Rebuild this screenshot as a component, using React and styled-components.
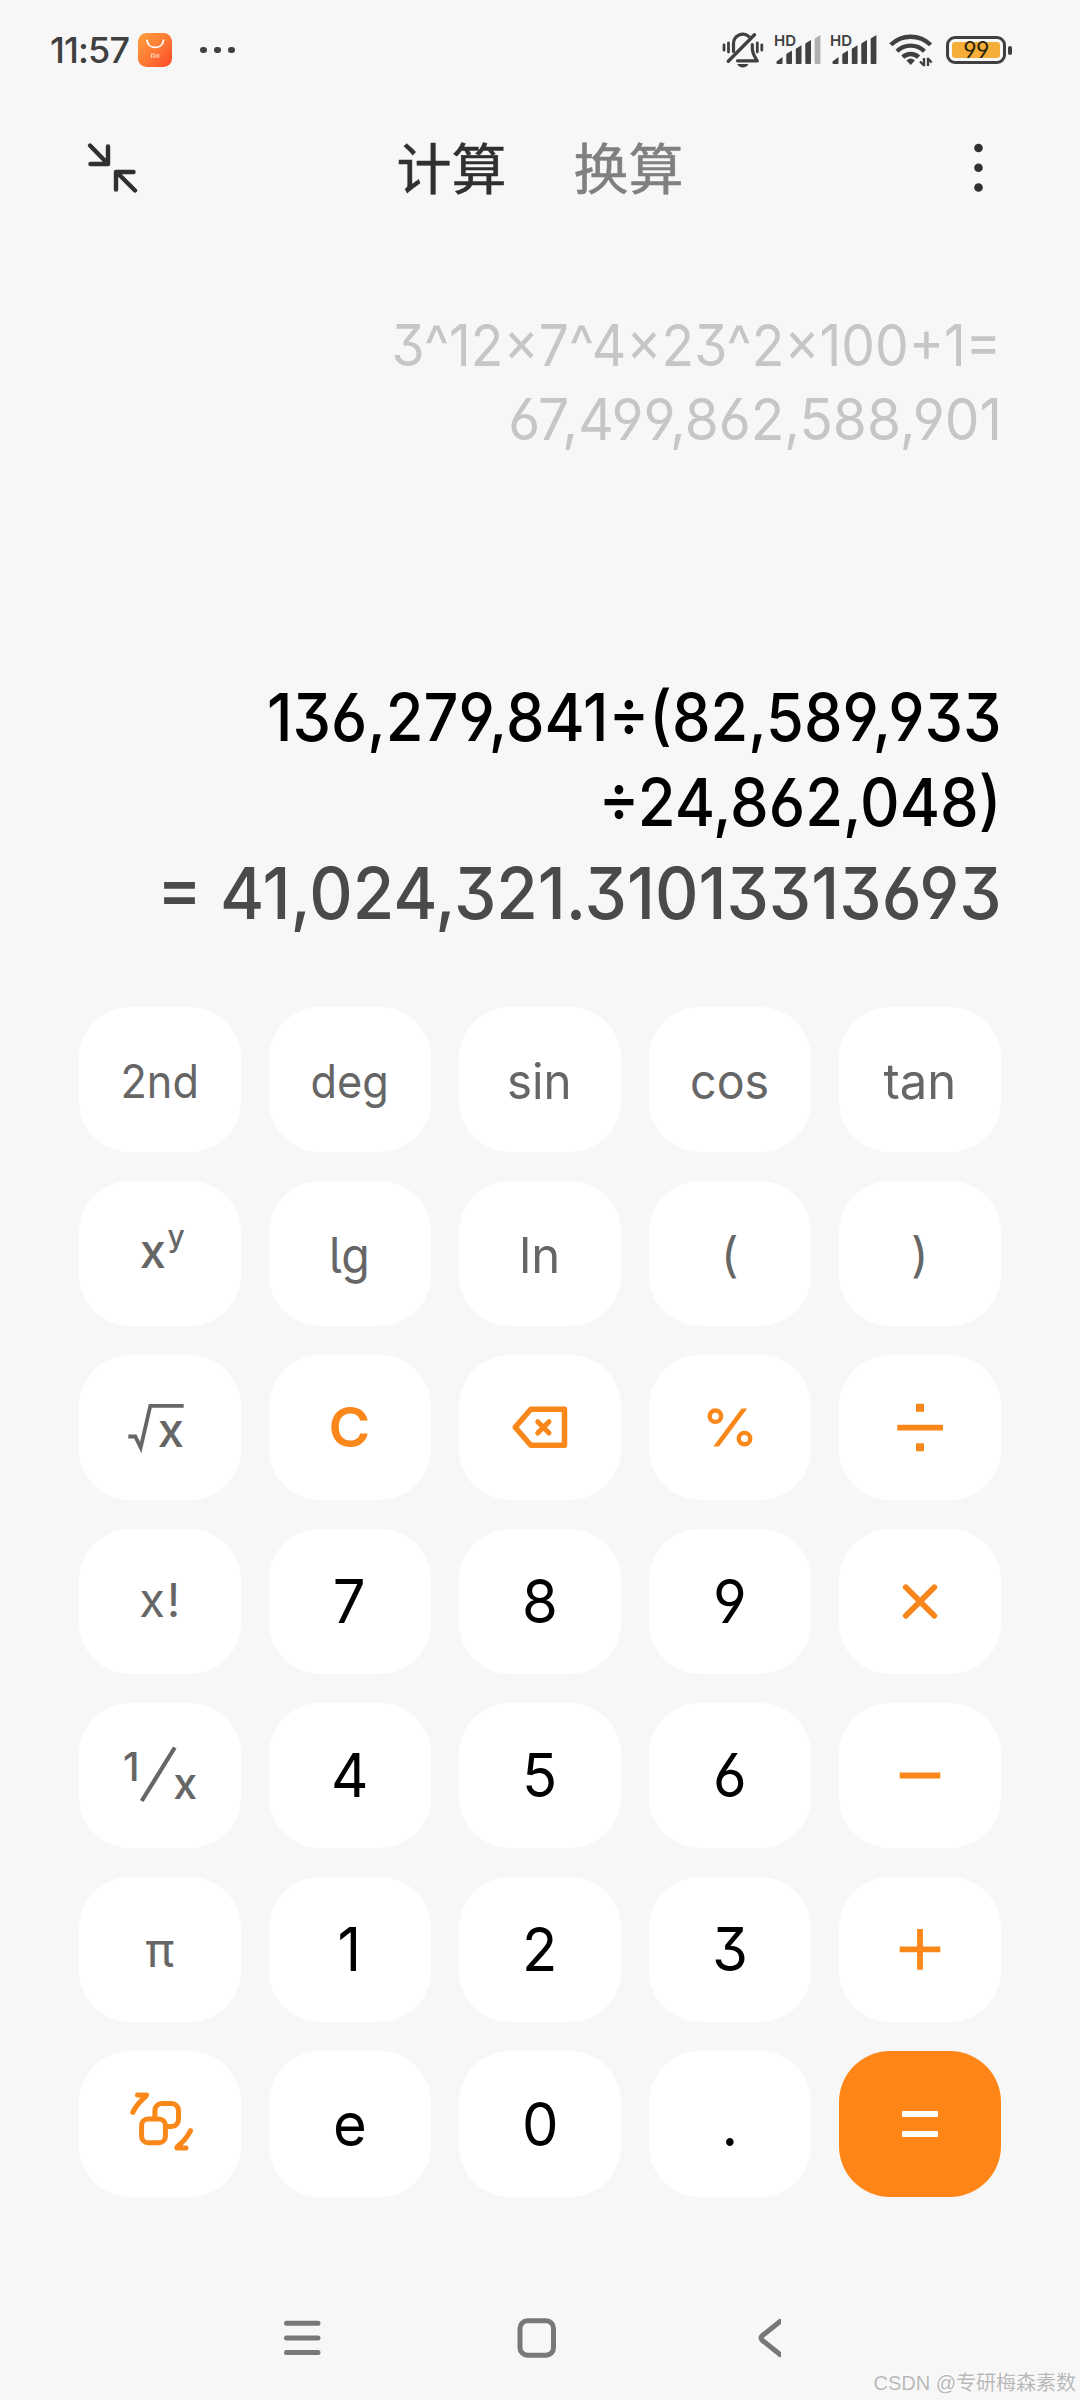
import styled, { createGlobalStyle } from 'styled-components';

const palette = {
  bg: '#f7f7f7',
  key: '#ffffff',
  ink: '#000000',
  title: '#303030',
  status: '#404040',
  muted: '#808080',
  func: '#666666',
  result: '#4a4a4a',
  history: '#c6c6c6',
  orange: '#fa8719',
  equals: '#ff8616',
};

const GlobalStyle = createGlobalStyle`
  body {
    margin: 0;
    background: ${palette.bg};
    font-family: Inter, 'Noto Sans CJK SC', sans-serif;
    font-feature-settings: 'cv03', 'cv04', 'cv09';
  }
`;

const Screen = styled.div`
  position: relative;
  display: flex;
  flex-direction: column;
  width: 1080px;
  height: 2400px;
  overflow: hidden;
  background: ${palette.bg};
`;

/* status bar */

const StatusBarBlock = styled.div`
  display: flex;
  align-items: center;
  height: 100px;
  padding: 0 68px 0 50px;
  color: ${palette.status};
  svg {
    display: block;
    flex: none;
    overflow: visible;
  }
`;

const Time = styled.span`
  width: 88px;
  font-size: 36px;
  font-weight: 500;
  letter-spacing: -0.9px;
  white-space: nowrap;
`;

const MoreDots = styled.div`
  display: flex;
  gap: 7.5px;
  margin-left: 28px;
  i {
    width: 6.5px;
    height: 6.5px;
    border-radius: 50%;
    background: ${palette.status};
  }
`;

const StatusIcons = styled.div`
  display: flex;
  align-items: center;
  margin-left: auto;
`;

const SignalGroup = styled.div`
  display: flex;
  gap: 8px;
  margin: 0 10px;
`;

const StoreIcon = () => (
  <svg width="34" height="34" viewBox="0 0 34 34">
    <defs>
      <linearGradient id="store" x1="0" y1="0" x2="1" y2="1">
        <stop offset="0" stopColor="#ffa03c" />
        <stop offset="0.5" stopColor="#ff7a36" />
        <stop offset="1" stopColor="#fd4a26" />
      </linearGradient>
    </defs>
    <rect width="34" height="34" rx="8.5" fill="url(#store)" />
    <path
      d="M9 7.3c1 9.5 15.5 9.5 16.5 0"
      fill="none"
      stroke="#fff"
      strokeWidth="1.8"
      strokeLinecap="round"
    />
    <path
      d="M13.5 24.8v-3.8h2.6q1 0 1 1v2.8M15.3 22.6v2.2M19 21v3.8M20.7 21v3.8"
      fill="none"
      stroke="#ffd9c4"
      strokeWidth="1"
    />
  </svg>
);

const MuteIcon = () => (
  <svg width="42" height="36" viewBox="0 0 42 36" fill="none" stroke={palette.status} strokeLinecap="round">
    <path strokeWidth="3.2" d="M11.5 19.5V11.5A9.3 9.3 0 0 1 27 4.6" />
    <path strokeWidth="3.2" d="M30.3 12.5v3.5c0 6 2 8 5 12.8H15.5" strokeLinejoin="round" />
    <path strokeWidth="3.4" d="M6.3 29.3L32.5 2.8" />
    <path strokeWidth="2.8" d="M2 12.8v5.4M6.5 11v9M35.3 11v9M39.8 12.8v5.4" />
    <path d="M15.3 32h11c-1 4.6-10 4.6-11 0z" fill={palette.status} stroke="none" />
  </svg>
);

const SignalIcon = ({ weak }) => (
  <svg width="48" height="32" viewBox="0 0 48 32" fill={palette.status}>
    <text x="0" y="11.8" fontSize="15" fontWeight="600" textLength="22" lengthAdjust="spacingAndGlyphs">
      HD
    </text>
    <path d="M2.5 27.5l6-4.5v6.2q0 .8-.8.8H3.2q-.7 0-.7-.8z" />
    <path d="M12.3 20l5.7-3.5v12.7q0 .8-.8.8h-4.1q-.8 0-.8-.8z" />
    <path d="M21.8 14.7l5.7-3.5v18q0 .8-.8.8h-4.1q-.8 0-.8-.8z" />
    <path d="M31.3 9.5L37 6v23.2q0 .8-.8.8h-4.1q-.8 0-.8-.8z" />
    <path
      d="M40.7 4.5l5.7-3.5v28.2q0 .8-.8.8h-4.1q-.8 0-.8-.8z"
      fill={weak ? '#b0b0b0' : palette.status}
    />
  </svg>
);

const WifiIcon = () => (
  <svg width="46" height="36" viewBox="0 0 46 36" fill="none" stroke={palette.status}>
    <path strokeWidth="4.4" d="M2.8 12.8a28.5 28.5 0 0 1 39.8 0" />
    <path strokeWidth="4.4" d="M9 19.2a19.5 19.5 0 0 1 27.4 0" />
    <path strokeWidth="4.4" d="M14.8 25.2a11.5 11.5 0 0 1 15.8 0" />
    <path d="M18.5 28.5q4.2-4 8.4 0l-4.2 4.6z" fill={palette.status} stroke="none" />
    <path strokeWidth="2.4" d="M36 26v8.2M36 33.5l-4-4M40 34v-8.2M40 26.5l3.6 4" />
  </svg>
);

const Battery = styled.div`
  display: flex;
  align-items: center;
  gap: 2px;
  margin-left: 12px;
  &::after {
    content: '';
    width: 4px;
    height: 9px;
    border-radius: 2px;
    background: ${palette.status};
  }
`;

const BatteryBody = styled.div`
  box-sizing: border-box;
  width: 60px;
  height: 28px;
  padding: 3px;
  border: 3px solid ${palette.status};
  border-radius: 9px;
`;

const BatteryLevel = styled.div`
  height: 16px;
  border-radius: 3px;
  background: #f5ae38;
  color: #2c2410;
  font-size: 23px;
  font-weight: 400;
  line-height: 17px;
  letter-spacing: -0.6px;
  text-align: center;
`;

const StatusBar = () => (
  <StatusBarBlock>
    <Time>11:57</Time>
    <StoreIcon />
    <MoreDots>
      <i />
      <i />
      <i />
    </MoreDots>
    <StatusIcons>
      <MuteIcon />
      <SignalGroup>
        <SignalIcon weak />
        <SignalIcon />
      </SignalGroup>
      <WifiIcon />
      <Battery>
        <BatteryBody>
          <BatteryLevel>99</BatteryLevel>
        </BatteryBody>
      </Battery>
    </StatusIcons>
  </StatusBarBlock>
);

/* header */

const HeaderBlock = styled.header`
  display: flex;
  align-items: center;
  justify-content: space-between;
  height: 136px;
  padding: 0 97px 0 86px;
`;

const Tabs = styled.nav`
  display: flex;
  gap: 67px;
  padding: 0 31px 6px 0;
`;

const Tab = styled.span`
  color: ${({ $active }) => ($active ? palette.title : palette.muted)};
  font-family: 'Noto Sans CJK SC', sans-serif;
  font-size: 55px;
  font-weight: 400;
  line-height: 80px;
  -webkit-text-stroke: 0.5px currentColor;
`;

const Header = () => (
  <HeaderBlock>
    <svg
      width="52"
      height="52"
      viewBox="0 0 52 52"
      fill="none"
      stroke={palette.title}
      strokeWidth="4.4"
      strokeLinecap="round"
      strokeLinejoin="round"
    >
      <path d="M4 3.5L21.5 21.5M22 4.5V22H4.5" />
      <path d="M49 48.5L31 30.5M30 47.5V30H47.5" />
    </svg>
    <Tabs>
      <Tab $active>计算</Tab>
      <Tab>换算</Tab>
    </Tabs>
    <svg width="10" height="50" viewBox="0 0 10 50" fill={palette.title}>
      <circle cx="5.5" cy="5" r="4.3" />
      <circle cx="5.5" cy="24.8" r="4.3" />
      <circle cx="5.5" cy="44.5" r="4.3" />
    </svg>
  </HeaderBlock>
);

/* display */

const Display = styled.section`
  display: flex;
  flex-direction: column;
  align-items: flex-end;
  height: 771px;
  padding-right: 78.5px;
  box-sizing: border-box;
`;

const Line = styled.div`
  font-size: ${({ $size }) => $size}px;
  white-space: nowrap;
  transform: scaleX(${({ $stretch }) => $stretch || 1});
  transform-origin: right center;
`;

const History = styled.div`
  display: flex;
  flex-direction: column;
  align-items: flex-end;
  margin-top: 72px;
  color: ${palette.history};
  line-height: 74px;
`;

const Expression = styled.div`
  display: flex;
  flex-direction: column;
  align-items: flex-end;
  margin-top: 219px;
  color: ${palette.ink};
  font-weight: 500;
  line-height: 85px;
`;

const Result = styled.div`
  margin-top: 6px;
  color: ${palette.result};
  font-weight: 450;
  line-height: 84px;
`;

/* keypad */

const Keypad = styled.div`
  display: grid;
  grid-template-columns: repeat(5, 161.5px);
  grid-template-rows: repeat(6, 145px) 146px;
  column-gap: 28.5px;
  row-gap: 29px;
  padding-left: 79px;
`;

const Key = styled.button`
  display: flex;
  align-items: center;
  justify-content: center;
  padding: 0;
  border: 0;
  border-radius: 51px;
  background: ${({ $primary }) => ($primary ? palette.equals : palette.key)};
  color: ${({ $tone }) => palette[$tone]};
  font-family: inherit;
  font-feature-settings: inherit;
`;

const Label = styled.span`
  margin-top: ${({ $drop }) => $drop || 0}px;
  font-size: ${({ $size }) => $size}px;
  font-weight: ${({ $weight }) => $weight || 400};
  font-feature-settings: ${({ $tail }) => ($tail ? "'cv05'" : 'inherit')};
  line-height: 1;
  letter-spacing: ${({ $spacing }) => $spacing || 0}px;
  text-indent: ${({ $spacing }) => $spacing || 0}px;
  transform: scaleX(${({ $stretch }) => $stretch || 1});
`;

const Glyph = styled.svg`
  display: block;
  width: 64px;
  height: 64px;
  overflow: visible;
  fill: none;
  stroke: currentColor;
  text {
    fill: currentColor;
    stroke: none;
    font-weight: 450;
  }
`;

const PowerGlyph = () => (
  <Glyph viewBox="0 0 64 64">
    <text x="11.8" y="46" fontSize="47">x</text>
    <text x="39.5" y="25" fontSize="30">y</text>
  </Glyph>
);

const RootGlyph = () => (
  <Glyph viewBox="0 0 64 64">
    <path d="M.3 40.5H7.3L12.7 51.5L22.3 9.8H55.7" strokeWidth="3.8" />
    <text x="29.7" y="50.5" fontSize="47">x</text>
  </Glyph>
);

const InverseGlyph = () => (
  <Glyph viewBox="0 0 64 64">
    <text x="-5" y="36.5" fontSize="40">1</text>
    <path d="M13.7 57L46.8 3.5" strokeWidth="4.2" />
    <text x="45.3" y="54.5" fontSize="43">x</text>
  </Glyph>
);

const DeleteGlyph = () => (
  <Glyph viewBox="0 0 64 64" strokeWidth="5.5" strokeLinejoin="round" strokeLinecap="round">
    <path d="M7.2 31.3L22.8 13.3H56.5V49.2H22.8Z" />
    <path d="M29.7 25.7L41 37M41 25.7L29.7 37" strokeWidth="5" />
  </Glyph>
);

const PercentGlyph = () => (
  <Glyph viewBox="0 0 64 64" strokeWidth="4.4">
    <circle cx="17.4" cy="20.2" r="5.7" />
    <circle cx="46.5" cy="42.6" r="5.7" />
    <path d="M15.3 50.5L43.5 12.5H49.2L21 50.5Z" fill="currentColor" stroke="none" />
  </Glyph>
);

const DivideGlyph = () => (
  <Glyph viewBox="0 0 64 64">
    <path d="M9.3 31.6H55" strokeWidth="5.8" />
    <path d="M28 11.8H36M28 51.2H36" strokeWidth="8" />
  </Glyph>
);

const TimesGlyph = () => (
  <Glyph viewBox="0 0 64 64" strokeWidth="5.8" strokeLinecap="round">
    <path d="M17.8 17.3L46.3 45.8M46.3 17.3L17.8 45.8" />
  </Glyph>
);

const MinusGlyph = () => (
  <Glyph viewBox="0 0 64 64" strokeWidth="6">
    <path d="M11.7 31.4H52.3" />
  </Glyph>
);

const PlusGlyph = () => (
  <Glyph viewBox="0 0 64 64" strokeWidth="5.8">
    <path d="M11.7 31.4H52.3M32 11V51.8" />
  </Glyph>
);

const EqualsGlyph = () => (
  <Glyph viewBox="0 0 64 64" strokeWidth="6">
    <path d="M14 22H50M14 42H50" />
  </Glyph>
);

const SwapGlyph = () => (
  <Glyph viewBox="0 0 64 64" strokeWidth="5" strokeLinecap="round" strokeLinejoin="round">
    <rect x="13.6" y="26.9" width="23.8" height="23.8" rx="6.5" />
    <path d="M26.9 26.5V18.5a7 7 0 0 1 7-7H43.5a7 7 0 0 1 7 7V27.5a7 7 0 0 1-7 7H39" strokeLinecap="butt" />
    <path d="M4.8 20.3Q9 11.5 18 4.2M9.5 2.9H18.6L14.5 7.5" />
    <path d="M62.5 38.7Q58.3 47.5 49 55M58 56H49L53 51.5" />
  </Glyph>
);

const func = (text, props) => ({ text, tone: 'func', size: 48, drop: 3, ...props });
const digit = (text) => ({ text, tone: 'ink', size: 61, stretch: 0.95 });
const icon = (Icon, name, tone = 'orange') => ({ Icon, name, tone });

const keys = [
  func('2nd', { size: 46, drop: 2, stretch: 0.94 }),
  func('deg', { size: 46, drop: 2, stretch: 0.94 }),
  func('sin', { size: 49, stretch: 0.97 }),
  func('cos', { size: 49, stretch: 0.95 }),
  func('tan', { size: 49, stretch: 1 }),

  icon(PowerGlyph, 'power', 'func'),
  func('lg', { size: 49, tail: true, stretch: 0.95 }),
  func('ln', { size: 49 }),
  func('('),
  func(')'),

  icon(RootGlyph, 'root', 'func'),
  { text: 'C', tone: 'orange', size: 55, weight: 600, stretch: 1.03 },
  icon(DeleteGlyph, 'delete'),
  icon(PercentGlyph, 'percent'),
  icon(DivideGlyph, 'divide'),

  func('x!', { size: 47, drop: -4, spacing: 2 }),
  digit('7'),
  digit('8'),
  digit('9'),
  icon(TimesGlyph, 'times'),

  icon(InverseGlyph, 'inverse', 'func'),
  digit('4'),
  digit('5'),
  digit('6'),
  icon(MinusGlyph, 'minus'),

  func('π', { drop: 0 }),
  digit('1'),
  digit('2'),
  digit('3'),
  icon(PlusGlyph, 'plus'),

  icon(SwapGlyph, 'switch layout'),
  digit('e'),
  digit('0'),
  digit('.'),
  { ...icon(EqualsGlyph, 'equals', 'key'), primary: true },
];

const KeypadItem = ({ item }) => {
  const { text, Icon, tone, name, primary, size, weight, spacing, drop, stretch, tail } = item;
  return (
    <Key $tone={tone} $primary={primary} aria-label={name}>
      {Icon ? (
        <Icon />
      ) : (
        <Label $size={size} $weight={weight} $spacing={spacing} $drop={drop} $stretch={stretch} $tail={tail}>
          {text}
        </Label>
      )}
    </Key>
  );
};

/* system navigation */

const SystemNav = styled.footer`
  display: flex;
  align-items: center;
  flex: 1;
  gap: 196px;
  padding: 78px 0 0 283px;
  svg {
    display: block;
    flex: none;
    fill: none;
    stroke: #787878;
    stroke-width: 5;
    stroke-linecap: round;
    stroke-linejoin: round;
  }
`;

const Watermark = styled.span`
  position: absolute;
  right: 4px;
  bottom: 4px;
  color: #b9b9b9;
  font-family: 'Liberation Sans', 'Noto Sans CJK SC', sans-serif;
  font-size: 20px;
  line-height: 26px;
  text-shadow: -1px -1px 0 #ffffff;
  white-space: nowrap;
`;

const App = () => (
  <>
    <GlobalStyle />
    <Screen>
      <StatusBar />
      <Header />
      <Display>
        <History>
          <Line $size={57.5} $stretch={0.929}>3^12×7^4×23^2×100+1=</Line>
          <Line $size={57.5} $stretch={0.957}>67,499,862,588,901</Line>
        </History>
        <Expression>
          <Line $size={65.5} $stretch={0.935}>136,279,841÷(82,589,933</Line>
          <Line $size={65.5} $stretch={0.938}>÷24,862,048)</Line>
        </Expression>
        <Result>
          <Line $size={71.5} $stretch={0.943}>= 41,024,321.31013313693</Line>
        </Result>
      </Display>
      <Keypad>
        {keys.map((item, i) => (
          <KeypadItem key={i} item={item} />
        ))}
      </Keypad>
      <SystemNav>
        <svg width="38" height="40" viewBox="0 0 38 40">
          <path d="M3.5 5.3H35M3.5 20H35M3.5 34.5H35" />
        </svg>
        <svg width="40" height="40" viewBox="0 0 40 40">
          <rect x="3" y="2.8" width="33.5" height="34.5" rx="7.5" />
        </svg>
        <svg width="28" height="40" viewBox="0 0 28 40">
          <path d="M27 3.5L9.5 17.500Q6.5 20 9.5 22.5L27 36.5" />
        </svg>
      </SystemNav>
      <Watermark>CSDN @专研梅森素数</Watermark>
    </Screen>
  </>
);

export default App;
